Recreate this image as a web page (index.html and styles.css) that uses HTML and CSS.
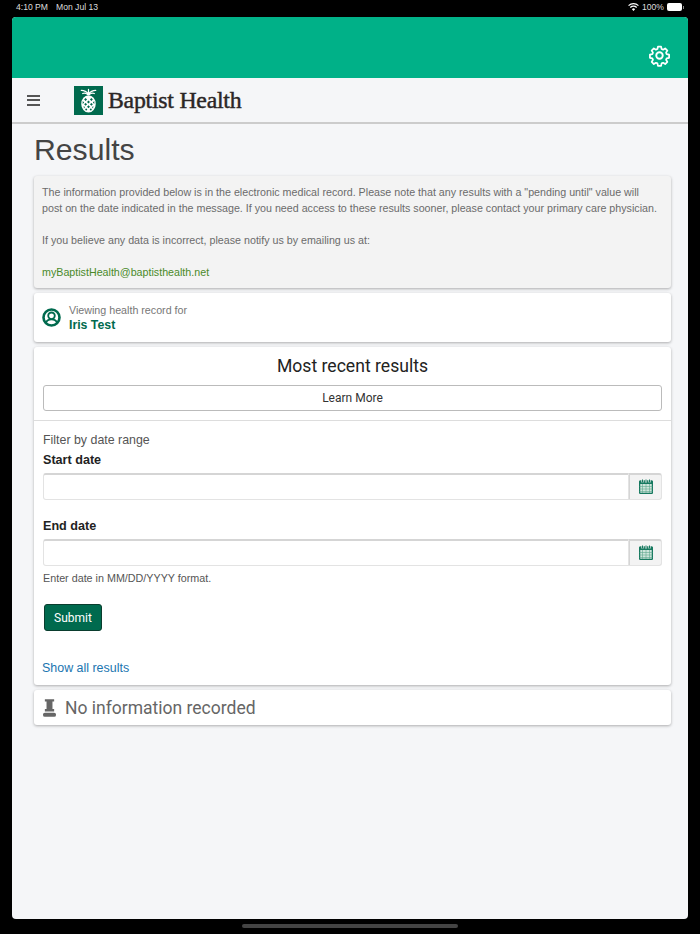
FILE: index.html
```html
<!DOCTYPE html>
<html lang="en">
<head>
<meta charset="utf-8">
<title>Results</title>
<link rel="stylesheet" href="styles.css">
</head>
<body>
<div class="status">
  <span class="status-left"><span>4:10 PM</span><span>Mon Jul 13</span></span>
  <span class="status-right">
    <svg class="wifi" width="11" height="8" viewBox="0 0 12 9"><path d="M6 9 4.200 6.900a2.600 2.600 0 0 1 3.600 0zM2.900 5.600 1.900 4.500a6 6 0 0 1 8.200 0L9.100 5.600a4.500 4.500 0 0 0-6.200 0zM.9 3.500 0 2.400a8.800 8.800 0 0 1 12 0l-.9 1.100a7.400 7.400 0 0 0-10.200 0z" fill="#fff"/></svg>
    <span>100%</span>
    <span class="battery"><span class="battery-body"></span><span class="battery-nub"></span></span>
  </span>
</div>
<div class="app">
  <header class="topbar">
    <svg width="23" height="23" viewBox="0 0 24 24" fill="none" stroke="#fff" stroke-width="2" stroke-linejoin="round"><circle cx="12" cy="12" r="3.400"/><path d="M10.200 1.800h3.600l.6 2.800 1.700.7 2.400-1.500 2.500 2.500-1.500 2.400.7 1.700 2.800.6v3.600l-2.800.6-.7 1.700 1.500 2.400-2.500 2.500-2.400-1.500-1.700.7-.6 2.800h-3.600l-.6-2.800-1.700-.7-2.400 1.500-2.500-2.500 1.500-2.400-.7-1.700-2.800-.6v-3.600l2.800-.6.7-1.700-1.500-2.400 2.500-2.500 2.400 1.500 1.700-.7z" transform="translate(1.100 1.100) scale(.91)"/></svg>
  </header>
  <nav class="navbar">
    <button class="menu" aria-label="Menu"><span></span><span></span><span></span></button>
    <div class="logo">
      <svg class="logo-mark" width="29" height="29" viewBox="0 0 30 30">
        <rect width="30" height="30" fill="#006a4e"/>
        <g fill="none" stroke="#fff" stroke-width="1.300" stroke-linecap="round"><path d="M15 9V3.500M15 8.500C13 5.500 10.500 4.500 7.500 4.500M15 8.500C17 5.500 19.500 4.500 22.500 4.500M14.500 9C12.500 7.500 10.500 7.200 9 7.800M15.500 9C17.500 7.500 19.500 7.200 21 7.800"/></g>
        <ellipse cx="15" cy="18.500" rx="7.500" ry="9" fill="#fff"/>
        <g fill="#006a4e"><path d="M12 12.500l1.500 1.500-1.500 1.500-1.500-1.500zM18 12.500l1.500 1.500-1.500 1.500-1.500-1.500zM15 15l1.500 1.500-1.500 1.500-1.500-1.500zM9 15.500l1.500 1.500-1.500 1.500zM21 15.500v3l-1.500-1.500zM12 17.500l1.500 1.500-1.500 1.500-1.500-1.500zM18 17.500l1.500 1.500-1.500 1.500-1.500-1.500zM15 20l1.500 1.500-1.500 1.500-1.500-1.500zM10 20.500l1.300 1.500-1 1.200zM20 20.500l-1.300 1.500 1 1.200zM12.500 23l1.300 1.300-1.300 1.300-1-1.300zM17.500 23l1 1.300-1 1.300-1.300-1.300z"/></g>
      </svg>
      <span class="logo-text">Baptist Health</span>
    </div>
  </nav>
  <main class="content">
    <h1 class="page-title">Results</h1>
    <section class="card card-notice">
      <p>The information provided below is in the electronic medical record. Please note that any results with a "pending until" value will<br>post on the date indicated in the message. If you need access to these results sooner, please contact your primary care physician.</p>
      <p>If you believe any data is incorrect, please notify us by emailing us at:</p>
      <p><a class="mail" href="#">myBaptistHealth@baptisthealth.net</a></p>
    </section>
    <section class="card card-record">
      <svg width="19" height="19" viewBox="0 0 19 19" fill="none" stroke="#006a4e"><circle cx="9.500" cy="9.500" r="8" stroke-width="2.600"/><circle cx="9.500" cy="7.800" r="3.300" stroke-width="1.800"/><path d="M3.800 15c1-2.800 3-3.600 5.700-3.600s4.700.8 5.700 3.600" stroke-width="1.800"/></svg>
      <div class="record-text">
        <div class="record-label">Viewing health record for</div>
        <div class="record-name">Iris Test</div>
      </div>
    </section>
    <section class="card card-filter">
      <div class="filter-head">
        <h2>Most recent results</h2>
        <button class="learn">Learn More</button>
      </div>
      <form class="filter-form">
        <div class="filter-title">Filter by date range</div>
        <label class="date-label">Start date</label>
        <div class="date-input"><span class="date-field"></span><span class="date-btn"><svg width="14" height="15" viewBox="0 0 14 15"><use href="#cal"/></svg></span></div>
        <label class="date-label date-label-end">End date</label>
        <div class="date-input"><span class="date-field"></span><span class="date-btn"><svg width="14" height="15" viewBox="0 0 14 15"><use href="#cal"/></svg></span></div>
        <div class="hint">Enter date in MM/DD/YYYY format.</div>
        <button class="submit" type="button">Submit</button>
      </form>
      <a class="show-all" href="#">Show all results</a>
    </section>
    <section class="card card-empty">
      <svg width="13" height="18" viewBox="0 0 14 19" fill="#666"><path d="M2 0h10v2.600h-1.800v8h1.800v2.600H2v-2.600h1.800v-8H2z"/><rect x="0" y="14.500" width="14" height="4.500" rx="2"/></svg>
      <span>No information recorded</span>
    </section>
  </main>
</div>
<div class="home-bar"></div>
<svg class="defs" width="0" height="0">
  <symbol id="cal" viewBox="0 0 14 15">
    <rect x=".6" y="2" width="12.800" height="12.400" rx="1" fill="#cfe5dc" stroke="#16795f" stroke-width="1.300"/>
    <rect x=".6" y="2" width="12.800" height="3" fill="#16795f"/>
    <path d="M3.500 .5v3M7 .5v3M10.500 .5v3" stroke="#f3f3f3" stroke-width="2.200" fill="none"/>
    <path d="M3.500 .5v3M7 .5v3M10.500 .5v3" stroke="#16795f" stroke-width="1" fill="none"/>
    <path d="M.6 7.500h12.800M.6 10h12.800M.6 12.500h12.800M3.500 5v9M7 5v9M10.500 5v9" stroke="#5fa78f" stroke-width=".6" fill="none"/>
  </symbol>
</svg>
</body>
</html>
```
FILE: styles.css
```css
* { box-sizing: border-box; }
html, body { margin: 0; padding: 0; }
body {
  width: 700px;
  height: 934px;
  background: #000;
  overflow: hidden;
  font-family: "Liberation Sans", sans-serif;
  color: #333;
  display: flex;
  flex-direction: column;
  align-items: center;
}
.status {
  width: 100%;
  height: 17px;
  flex: none;
  padding: 0 16px 3px 16px;
  color: #ddd;
  font: 8.600px/13px "Liberation Sans", sans-serif;
  display: flex;
  justify-content: space-between;
  align-items: center;
}
.status-left { display: flex; gap: 8px; }
.status-right { display: flex; align-items: center; gap: 3px; }
.battery { display: flex; align-items: center; gap: 1px; }
.battery-body {
  display: block;
  width: 15px;
  height: 8px;
  background: #fff;
  border-radius: 2px;
}
.battery-nub { display: block; width: 1px; height: 3px; background: #888; }
.app {
  width: 676px;
  height: 902px;
  flex: none;
  background: #f5f6f8;
  border-radius: 4px;
  overflow: hidden;
}
.topbar {
  height: 61px;
  background: #00b188;
  display: flex;
  justify-content: flex-end;
  align-items: flex-end;
  padding: 0 17px 11px 0;
}
.navbar {
  height: 46px;
  background: #f5f6f8;
  border-bottom: 2px solid #ccc;
  display: flex;
  align-items: center;
  padding-left: 15px;
}
.menu {
  width: 14px;
  height: 11px;
  padding: 0;
  border: 0;
  background: none;
  display: flex;
  flex-direction: column;
  justify-content: space-between;
}
.menu span { display: block; height: 2px; width: 13px; background: #555; }
.logo { display: flex; align-items: center; margin-left: 33px; gap: 5px; }
.logo-mark { display: block; }
.logo-text {
  font: 400 23.800px/30px "Liberation Serif", serif;
  color: #2b2626;
  letter-spacing: -.25px;
  -webkit-text-stroke: .45px #2b2626;
}
.content { padding: 6px 17px 0 22px; }
.page-title {
  margin: 0 0 6px;
  font: 400 30.200px/40px "Liberation Sans", sans-serif;
  color: #444;
}
.card {
  background: #fff;
  border-radius: 3px;
  box-shadow: 0 1px 3px rgba(0, 0, 0, .3);
  margin-bottom: 5px;
}
.card-notice {
  background: #f3f3f3;
  padding: 8px;
  height: 112px;
  font-size: 10.700px;
  line-height: 16px;
  color: #6b6b6b;
}
.card-notice p { margin: 0 0 16px; }
.card-notice p:last-child { margin: 0; }
.mail { color: #4a8a2a; text-decoration: none; }
.card-record {
  height: 49px;
  display: flex;
  align-items: center;
  padding-left: 8px;
  gap: 8px;
}
.record-label { font-size: 10.700px; line-height: 14px; color: #777; }
.record-name { font-size: 12.300px; line-height: 16px; font-weight: 700; color: #006a4e; }
.card-filter { height: 338px; }
.filter-head {
  height: 74px;
  border-bottom: 1px solid #ddd;
  padding: 8px 9px 0;
  text-align: center;
}
.filter-head h2 {
  margin: 0 0 8px;
  font: 400 17.600px/22px "Roboto", sans-serif;
  color: #222;
}
.learn {
  display: block;
  width: 100%;
  height: 26px;
  border: 1px solid #bbb;
  border-radius: 3px;
  background: #fff;
  font: 12px "Roboto", sans-serif;
  color: #333;
}
.filter-form { padding: 11px 9px 0; }
.filter-title { font-size: 12.400px; line-height: 16px; color: #555; }
.date-label { display: block; font-size: 12.600px; line-height: 16px; font-weight: 700; color: #222; margin-top: 4px; }
.date-label-end { margin-top: 18px; }
.date-input { display: flex; height: 27px; margin-top: 5px; }
.date-field {
  flex: 1;
  border: 1px solid #e3e3e3;
  border-top: 2px solid #d5d5d5;
  border-radius: 3px 0 0 3px;
  background: #fff;
}
.date-btn {
  width: 33px;
  display: flex;
  align-items: center;
  justify-content: center;
  padding-bottom: 2px;
  background: #f3f3f3;
  border: 1px solid #e3e3e3;
  border-top: 2px solid #d5d5d5;
  border-left-color: #d5d5d5;
  border-radius: 0 3px 3px 0;
}
.hint { font-size: 10.750px; line-height: 14px; color: #555; margin-top: 5px; }
.submit {
  display: block;
  margin: 19px 0 0 1px;
  width: 58px;
  height: 27px;
  background: #006a4e;
  border: 1px solid #0a3d2e;
  border-radius: 3px;
  color: #fff;
  font: 12px "Roboto", sans-serif;
}
.show-all { display: block; margin: 29px 0 0 8px; font-size: 12.450px; line-height: 16px; color: #1a75b0; text-decoration: none; }
.card-empty {
  height: 35px;
  display: flex;
  align-items: center;
  padding-left: 9px;
  gap: 9px;
  font-family: "Roboto", sans-serif;
  font-size: 17.500px;
  color: #666;
}
.home-bar { width: 216px; height: 4px; margin-top: 5px; background: #444; border-radius: 2px; flex: none; }
.defs { position: absolute; }
```
